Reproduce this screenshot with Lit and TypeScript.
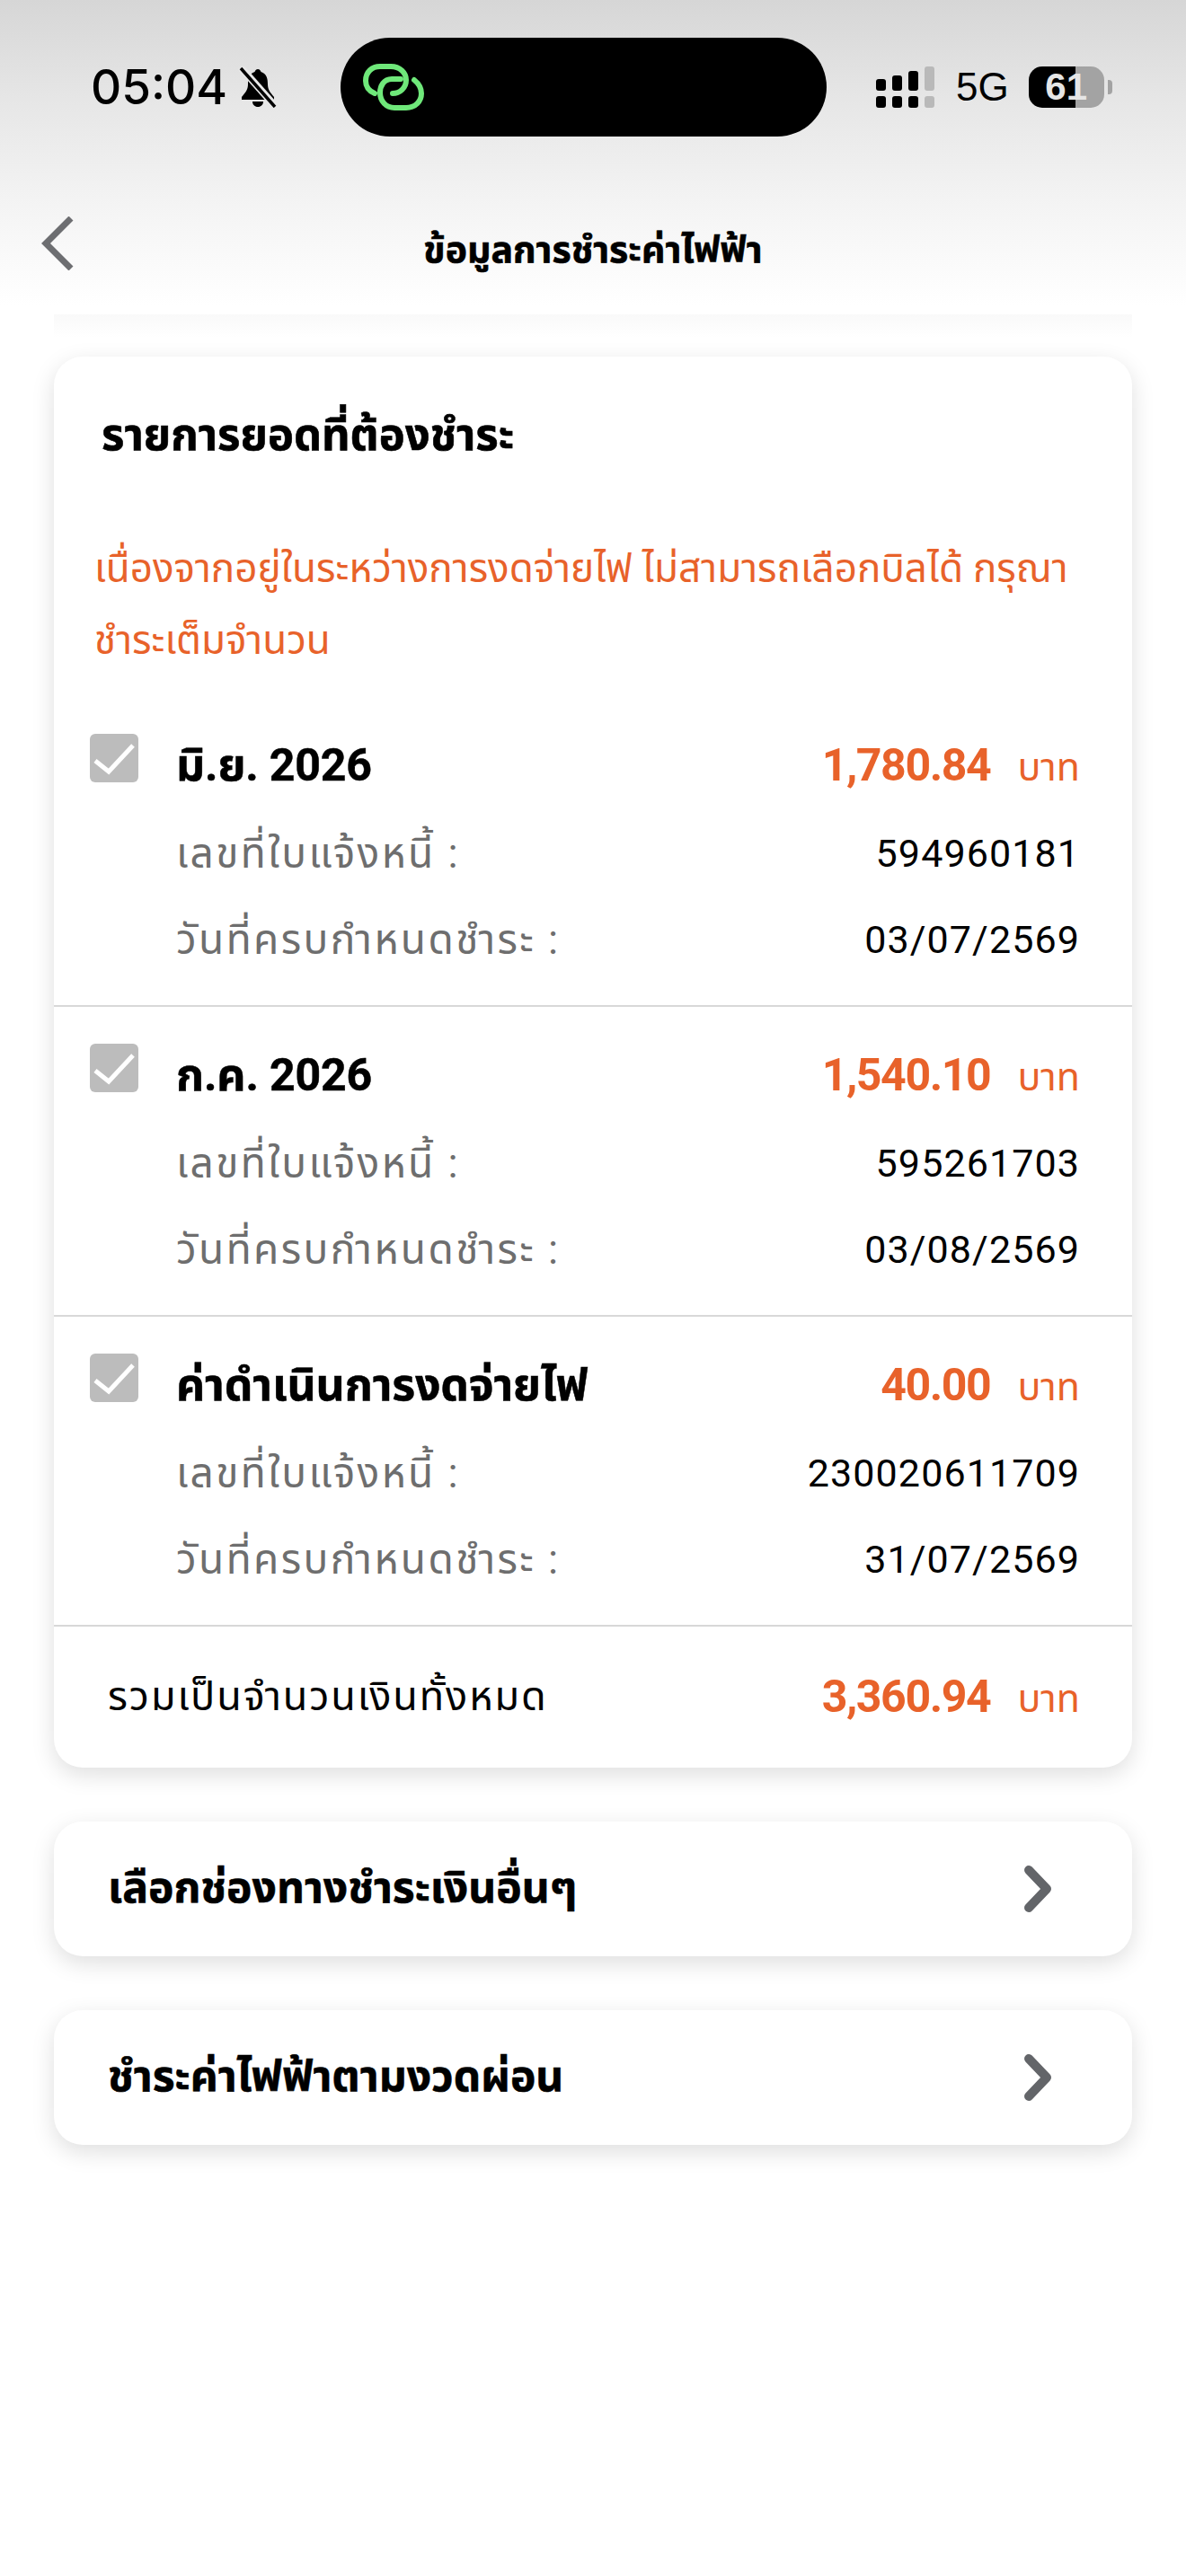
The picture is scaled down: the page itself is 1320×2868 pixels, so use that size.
import { LitElement, html, css } from 'lit';
import { customElement } from 'lit/decorators.js';

const bills = [
  { name: 'มิ.ย. 2026', amount: '1,780.84', invoice: '594960181', due: '03/07/2569' },
  { name: 'ก.ค. 2026', amount: '1,540.10', invoice: '595261703', due: '03/08/2569' },
  { name: 'ค่าดำเนินการงดจ่ายไฟ', amount: '40.00', invoice: '230020611709', due: '31/07/2569' },
];

@customElement('app-root')
export class AppRoot extends LitElement {
  static styles = css`
    :host {
      display: block;
      width: 1320px;
      height: 2868px;
      background: #fff;
      overflow: hidden;
      font-family: "Roboto", "Noto Sans Thai", "Noto Sans", "DejaVu Sans", sans-serif;
      color: #000;
    }

    .top {
      height: 350px;
      background: linear-gradient(#d6d6d6 0, #e6e6e6 110px, #f3f3f3 220px, #fff 340px);
    }

    .status {
      display: flex;
      align-items: center;
      height: 110px;
      padding-top: 42px;
      padding-left: 101px;
      font-family: "Liberation Sans", sans-serif;
    }

    .time {
      width: 164px;
      font-family: "Inter", sans-serif;
      font-size: 53px;
      font-weight: 500;
    }

    .bell {
      width: 44px;
      height: 46px;
    }

    .island {
      display: flex;
      align-items: center;
      width: 541px;
      height: 110px;
      margin-left: 70px;
      padding-left: 25px;
      box-sizing: border-box;
      border-radius: 55px;
      background: #000;
    }

    .signal {
      width: 66px;
      height: 46px;
      margin-left: 55px;
    }

    .net {
      margin-left: 23px;
      font-size: 44px;
      line-height: 46px;
    }

    .battery {
      display: flex;
      align-items: center;
      margin-left: 22px;
    }

    .cell {
      width: 84px;
      height: 46px;
      border-radius: 15px;
      background: linear-gradient(90deg, #000 52px, #a3a3a3 52px);
      color: #e6e6e6;
      font-size: 42px;
      font-weight: 700;
      line-height: 46px;
      text-align: center;
    }

    .nub {
      width: 5px;
      height: 16px;
      margin-left: 4px;
      border-radius: 0 4px 4px 0;
      background: #a3a3a3;
    }

    .nav {
      position: relative;
      display: flex;
      align-items: center;
      justify-content: center;
      height: 120px;
      margin-top: 66px;
    }

    .back {
      position: absolute;
      left: 46px;
      top: 23px;
      width: 36px;
      height: 60px;
    }

    .title {
      padding-top: 2px;
      font-size: 41px;
      font-weight: 700;
      -webkit-text-stroke: 0.6px #000;
    }

    .shade {
      height: 47px;
      margin: 0 60px;
      background: linear-gradient(#f9f9f9, #fff 26px);
    }

    main {
      display: flex;
      flex-direction: column;
      gap: 60px;
      padding: 0 60px;
    }

    .card {
      border-radius: 32px;
      background: #fff;
      box-shadow: 0 8px 26px rgba(0, 0, 0, 0.13);
    }

    .heading {
      padding: 56px 0 0 53px;
      font-size: 49px;
      font-weight: 700;
      line-height: 64px;
      -webkit-text-stroke: 0.6px #000;
    }

    .warning {
      margin-top: 76px;
      padding-left: 45px;
      color: #e8622a;
      font-size: 44px;
      line-height: 80px;
    }

    .bill {
      display: grid;
      grid-template-columns: 54px 1fr auto;
      grid-template-rows: 87px 96px 96px;
      column-gap: 42px;
      height: 302px;
      padding: 41px 58px 0 40px;
      border-bottom: 2px solid #d8d8d8;
    }

    .warning + .bill {
      margin-top: 23px;
    }

    .check {
      width: 54px;
      height: 54px;
    }

    .bill-name {
      font-size: 50px;
      font-weight: 700;
      letter-spacing: -0.2px;
      line-height: 70px;
      -webkit-text-stroke: 0.5px #000;
    }

    .amount {
      display: flex;
      align-items: baseline;
      justify-content: flex-end;
      gap: 30px;
      color: #e8622a;
      line-height: 70px;
    }

    .amount b {
      font-size: 50px;
      font-weight: 700;
      letter-spacing: -1.4px;
    }

    .amount span {
      font-size: 43px;
    }

    .label {
      grid-column: 2;
      margin-top: -2px;
      color: #6e6e6e;
      font-size: 46px;
      letter-spacing: 2.4px;
      line-height: 96px;
    }

    .value {
      margin-top: -2px;
      font-size: 43px;
      letter-spacing: 1.1px;
      line-height: 96px;
      text-align: right;
    }

    .total {
      display: flex;
      align-items: center;
      justify-content: space-between;
      height: 157px;
      padding: 0 58px 0 60px;
      font-size: 45px;
      letter-spacing: 1.9px;
    }

    .total .amount {
      letter-spacing: normal;
    }

    .option {
      display: flex;
      align-items: center;
      justify-content: space-between;
      height: 150px;
      padding: 0 90px 0 60px;
      font-size: 48px;
      font-weight: 700;
      -webkit-text-stroke: 0.6px #000;
    }

    .chevron {
      width: 30px;
      height: 52px;
    }
  `;

  render() {
    return html`
      <div class="top">
        <div class="status">
          <span class="time">05:04</span>
          <svg class="bell" viewBox="0 0 44 46">
            <path d="M22 3c-2 0-3 1.500-3.500 3C12 8 11 14 11 20c0 6-3 9-7 14v3h36v-3c-4-5-7-8-7-14 0-6-1-12-7.500-14C25 4.500 24 3 22 3z" fill="#000"/>
            <path d="M16 39h12c0 3.500-2.500 6-6 6s-6-2.500-6-6z" fill="#000"/>
            <path d="M3 1l38 43" stroke="#e8e8e8" stroke-width="8"/>
            <path d="M3 2l38 43" stroke="#000" stroke-width="3.500"/>
          </svg>
          <div class="island">
            <svg width="68" height="53" viewBox="0 0 68 53" fill="none" stroke="#6fe87a" stroke-width="6" stroke-linecap="round">
              <path d="M13 33C6 30 3 25 3 19 3 9 10 3 19 3H31C41 3 48 10 48 18 48 27 41 33 33 33"/>
              <path d="M42 17H32C23 17 19 25 19 32 19 42 26 49 35 49H48C58 49 65 42 65 33 65 27 62 22 57 18"/>
            </svg>
          </div>
          <svg class="signal" viewBox="0 0 66 46">
            <g fill="#000">
              <rect x="0" y="33" width="11" height="13" rx="3"/>
              <rect x="18" y="33" width="11" height="13" rx="3"/>
              <rect x="36" y="33" width="11" height="13" rx="3"/>
              <rect x="0" y="14" width="11" height="13" rx="3"/>
              <rect x="18" y="10" width="11" height="17" rx="3"/>
              <rect x="36" y="5" width="11" height="22" rx="3"/>
            </g>
            <g fill="#b9b9b9">
              <rect x="54" y="33" width="11" height="13" rx="3"/>
              <rect x="54" y="0" width="11" height="27" rx="3"/>
            </g>
          </svg>
          <span class="net">5G</span>
          <div class="battery">
            <div class="cell">61</div>
            <div class="nub"></div>
          </div>
        </div>
        <div class="nav">
          <svg class="back" viewBox="0 0 36 60" fill="none" stroke="#6d6e71" stroke-width="7">
            <path d="M33 2L5 30l28 28"/>
          </svg>
          <span class="title">ข้อมูลการชำระค่าไฟฟ้า</span>
        </div>
      </div>
      <div class="shade"></div>
      <main>
        <section class="card">
          <div class="heading">รายการยอดที่ต้องชำระ</div>
          <div class="warning">เนื่องจากอยู่ในระหว่างการงดจ่ายไฟ ไม่สามารถเลือกบิลได้ กรุณา<br />ชำระเต็มจำนวน</div>
          ${bills.map(
            (bill) => html`
              <div class="bill">
                <svg class="check" viewBox="0 0 54 54">
                  <rect width="54" height="54" rx="6" fill="#bcbcbc"/>
                  <path d="M6 30l15 12L48 13" fill="none" stroke="#fff" stroke-width="5"/>
                </svg>
                <div class="bill-name">${bill.name}</div>
                <div class="amount"><b>${bill.amount}</b><span>บาท</span></div>
                <div class="label">เลขที่ใบแจ้งหนี้ :</div>
                <div class="value">${bill.invoice}</div>
                <div class="label">วันที่ครบกำหนดชำระ :</div>
                <div class="value">${bill.due}</div>
              </div>
            `
          )}
          <div class="total">
            <span>รวมเป็นจำนวนเงินทั้งหมด</span>
            <div class="amount"><b>3,360.94</b><span>บาท</span></div>
          </div>
        </section>
        ${['เลือกช่องทางชำระเงินอื่นๆ', 'ชำระค่าไฟฟ้าตามงวดผ่อน'].map(
          (label) => html`
            <div class="card option">
              <span>${label}</span>
              <svg class="chevron" viewBox="0 0 30 52" fill="none" stroke="#636569" stroke-width="10" stroke-linecap="round" stroke-linejoin="round">
                <path d="M5 5l20 21L5 47"/>
              </svg>
            </div>
          `
        )}
      </main>
    `;
  }
}
